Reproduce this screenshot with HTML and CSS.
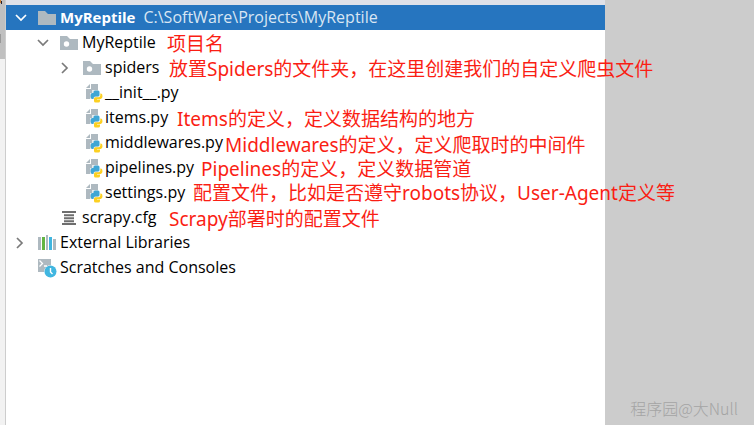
FILE: index.html
```
<!DOCTYPE html>
<html lang="zh">
<head>
<meta charset="utf-8">
<title>MyReptile</title>
<link rel="stylesheet" href="styles.css">
</head>
<body>
<svg class="defs" aria-hidden="true">
  <symbol id="down" viewBox="0 0 12 12"><path d="M1 3 6 8 11 3" fill="none" stroke="currentColor" stroke-width="1.700"/></symbol>
  <symbol id="right" viewBox="0 0 12 12"><path d="M2 1l5 5-5 5" fill="none" stroke="currentColor" stroke-width="1.700"/></symbol>
  <symbol id="folder" viewBox="0 0 18 18"><path d="M0 2h7l3 3h8v11H0z" fill="#aeb9c0"/></symbol>
  <symbol id="package" viewBox="0 0 18 18"><path d="M0 2h7l3 3h8v11H0z" fill="#aeb9c0"/><circle cx="6.500" cy="10" r="2.700" fill="#fff"/></symbol>
  <symbol id="python" viewBox="0 0 20 20">
    <path d="M8 1h7v15H3V6h5z" fill="#aeb9c0"/><path d="M7 1v4H3z" fill="#aeb9c0"/>
    <path d="M9 7h8v3h3v8h-4v2H9v-4H7v-6h2z" fill="#fff" opacity=".7"/>
    <path d="M10.500 10V9q0-1.500 1.500-1.500h3q1.500 0 1.500 1.500v3q0 1.500-1.500 1.500h-2.500q-2 0-2 2v.5H9.500q-2 0-2-3t2-3H14V10z" fill="#40a6d5"/>
    <path d="M17.300 10.500h.7q1.500 0 1.500 2.800t-2 2.700H14v.500h3V18q0 1.500-1.500 1.500h-3Q11 19.500 11 18v-2q0-1.700 1.500-1.700h2.800q2 0 2-1.800z" fill="#fcd022"/>
  </symbol>
  <symbol id="config" viewBox="0 0 18 18"><path d="M2 2h14v2H2zM4 5.200h10v2H4zM4 8.200h10v2H4zM4 11.200h10v2H4zM2 14h14v2H2z" fill="#6e6e6e"/></symbol>
  <symbol id="library" viewBox="0 0 18 18"><path d="M0 3h3v13H0zM8 1h2v15H8zM15 5h3v11h-3z" fill="#aeb9c0"/><path d="M4 3h3v13H4z" fill="#62b543"/><path d="M11 3h3v13h-3z" fill="#40b6e0"/></symbol>
  <symbol id="scratch" viewBox="0 0 20 20"><path d="M0 1h13v6a7 7 0 0 0-7 7H0z" fill="#aeb9c0"/><path d="M1.500 2.500l3 3-3 3M6 8h3" fill="none" stroke="#fff" stroke-width="1.300"/><circle cx="12.500" cy="13.500" r="6" fill="#40b6e0"/><path d="M12.500 10v4l2 2" fill="none" stroke="#fff" stroke-width="1.400"/></symbol>
</svg>
<div class="window">
  <aside class="rail"><svg class="tab" viewBox="0 0 5 59"><path d="M0 0h1v3H0z" fill="#d07a28"/><path d="M1 1h1v3H1z" fill="#223"/><path d="M0 34h1v9H0z" fill="#999"/></svg></aside>
  <main class="panel">
    <ul class="tree">
      <li class="row selected"><svg class="chevron"><use href="#down"/></svg><svg class="icon"><use href="#folder"/></svg><b>MyReptile</b><span class="path">C:\SoftWare\Projects\MyReptile</span></li>
      <li class="row level-1"><svg class="chevron"><use href="#down"/></svg><svg class="icon"><use href="#package"/></svg><span>MyReptile</span></li>
      <li class="row level-2"><svg class="chevron"><use href="#right"/></svg><svg class="icon"><use href="#package"/></svg><span>spiders</span></li>
      <li class="row level-2"><span class="chevron"></span><svg class="icon badged"><use href="#python"/></svg><span>__init__.py</span></li>
      <li class="row level-2"><span class="chevron"></span><svg class="icon badged"><use href="#python"/></svg><span>items.py</span></li>
      <li class="row level-2"><span class="chevron"></span><svg class="icon badged"><use href="#python"/></svg><span>middlewares.py</span></li>
      <li class="row level-2"><span class="chevron"></span><svg class="icon badged"><use href="#python"/></svg><span>pipelines.py</span></li>
      <li class="row level-2"><span class="chevron"></span><svg class="icon badged"><use href="#python"/></svg><span>settings.py</span></li>
      <li class="row level-1"><span class="chevron"></span><svg class="icon"><use href="#config"/></svg><span>scrapy.cfg</span></li>
      <li class="row"><svg class="chevron"><use href="#right"/></svg><svg class="icon"><use href="#library"/></svg><span>External Libraries</span></li>
      <li class="row"><span class="chevron"></span><svg class="icon badged"><use href="#scratch"/></svg><span>Scratches and Consoles</span></li>
    </ul>
  </main>
  <section class="editor"><span class="watermark">程序园@大Null</span></section>
  <div class="notes">
    <p class="note project">项目名</p>
    <p class="note spiders">放置Spiders的文件夹，在这里创建我们的自定义爬虫文件</p>
    <p class="note items">Items的定义，定义数据结构的地方</p>
    <p class="note middlewares">Middlewares的定义，定义爬取时的中间件</p>
    <p class="note pipelines">Pipelines的定义，定义数据管道</p>
    <p class="note settings">配置文件，比如是否遵守robots协议，User-Agent定义等</p>
    <p class="note config">Scrapy部署时的配置文件</p>
  </div>
</div>
</body>
</html>
```
FILE: styles.css
```
* { box-sizing: border-box; }
body {
  margin: 0;
  background: #fff;
  color: #000;
  font: 16px/25px "Open Sans", "Noto Sans CJK SC", sans-serif;
}
.defs { position: absolute; width: 0; height: 0; }
.window {
  position: relative;
  display: grid;
  grid-template-columns: 6px 599fr 149fr;
  min-height: 100vh;
}
.rail { background: #f2f2f2; border-right: 1px solid #cdcdcd; }
.tab { display: block; width: 100%; height: 59px; background: #c0c0c0; }
.panel { border-top: 5px solid #dfe1e8; min-width: 0; }
.tree { margin: 0; padding: 0; list-style: none; }
.row {
  display: flex;
  align-items: center;
  height: 25px;
  padding-left: 9px;
  white-space: nowrap;
}
.level-1 { padding-left: 31px; }
.level-2 { padding-left: 54px; }
.chevron { width: 12px; height: 12px; margin-right: 11px; color: #7a7a7a; }
.icon { width: 18px; height: 18px; margin-right: 4px; }
.badged { width: 20px; height: 20px; margin-right: 2px; }
.selected { background: #2675bf; color: #fff; }
.selected .chevron { color: #fff; }
.selected b { font-size: 15px; }
.path { margin-left: 8px; color: #d9e6f3; }
.editor {
  display: flex;
  align-items: flex-end;
  justify-content: flex-end;
  padding: 0 16px 4px 0;
  background: #ccc;
}
.watermark { color: #a4a4a4; font-family: "Noto Sans CJK SC", sans-serif; font-size: 16px; font-weight: 300; white-space: nowrap; }
.notes { position: absolute; inset: 0; pointer-events: none; }
.note {
  position: absolute;
  margin: 0;
  color: #fa1e14;
  font-family: "Noto Sans", "Noto Sans CJK SC", sans-serif;
  font-size: 19px;
  line-height: 24px;
  white-space: nowrap;
}
.project { left: 167px; top: 32px; }
.spiders { left: 169px; top: 57px; }
.items { left: 177px; top: 107px; }
.middlewares { left: 225px; top: 133px; }
.pipelines { left: 201px; top: 157px; }
.settings { left: 193px; top: 181px; }
.config { left: 169px; top: 207px; }
```
